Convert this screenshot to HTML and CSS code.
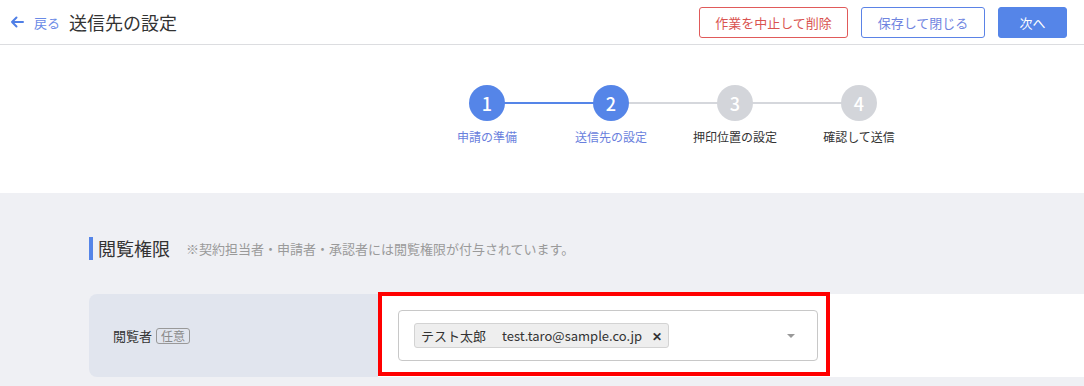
FILE: index.html
```html
<!DOCTYPE html>
<html lang="ja">

<head>
  <meta charset="UTF-8">
  <title>送信先の設定</title>
  <link rel="stylesheet" href="styles.css">
</head>

<body>
  <header class="topbar">
    <a class="back" href="#">
      <svg width="14" height="12" viewBox="0 0 14 12">
        <path d="M13 6H2M6.5 1.5L2 6l4.5 4.5" fill="none" stroke="#4f7fe6" stroke-width="2" stroke-linecap="round" stroke-linejoin="round"/>
      </svg>
      <span>戻る</span>
    </a>
    <h1 class="title">送信先の設定</h1>
    <div class="actions">
      <button class="btn btn-danger">作業を中止して削除</button>
      <button class="btn btn-outline">保存して閉じる</button>
      <button class="btn btn-primary">次へ</button>
    </div>
  </header>

  <div class="stepper">
    <div class="step done">
      <div class="dot">1</div>
      <div class="label">申請の準備</div>
    </div>
    <div class="step done">
      <div class="dot">2</div>
      <div class="label">送信先の設定</div>
    </div>
    <div class="step">
      <div class="dot">3</div>
      <div class="label">押印位置の設定</div>
    </div>
    <div class="step">
      <div class="dot">4</div>
      <div class="label">確認して送信</div>
    </div>
  </div>

  <main class="content">
    <div class="section-head">
      <h2>閲覧権限</h2>
      <span class="note">※契約担当者・申請者・承認者には閲覧権限が付与されています。</span>
    </div>

    <div class="field-row">
      <div class="field-label">
        閲覧者 <span class="badge">任意</span>
      </div>
      <div class="field-value">
        <div class="select">
          <span class="chip">
            <span class="chip-name">テスト太郎</span>
            <span>test.taro@sample.co.jp</span>
            <span class="chip-x">✕</span>
          </span>
          <span class="caret"></span>
        </div>
      </div>
      <!-- annotation frame -->
      <div class="highlight"></div>
    </div>
  </main>
</body>

</html>
```

FILE: styles.css
```css
body {
  margin: 0;
  width: 1084px;
  height: 386px;
  overflow: hidden;
  font-family: "Noto Sans CJK JP", "Noto Sans", sans-serif;
  color: #333;
  background: #fff;
}

.topbar {
  display: flex;
  align-items: center;
  height: 44px;
  padding: 0 17px 0 10px;
  border-bottom: 1px solid #dcdde0;
}

.back {
  display: flex;
  align-items: center;
  gap: 10px;
  color: #6a8ae6;
  font-size: 13px;
  text-decoration: none;
}

.title {
  margin: 0 0 0 9px;
  font-size: 18px;
  font-weight: normal;
  color: #333;
}

.actions {
  margin-left: auto;
  display: flex;
  gap: 13px;
}

.btn {
  height: 31px;
  padding: 0;
  white-space: nowrap;
  font-family: inherit;
  font-size: 13px;
  border-radius: 3px;
  background: #fff;
  cursor: pointer;
}

.btn-danger {
  width: 149px;
  border: 1px solid #e05a5a;
  color: #d9534f;
}

.btn-outline {
  width: 124px;
  border: 1px solid #5b83e6;
  color: #6f84df;
}

.btn-primary {
  width: 69px;
  border: 1px solid #5585e8;
  background: #5585e8;
  color: #fff;
}

.stepper {
  display: flex;
  height: 148px;
  padding-left: 425px;
  padding-top: 40px;
  box-sizing: border-box;
}

.step {
  position: relative;
  width: 124px;
  display: flex;
  flex-direction: column;
  align-items: center;
}

.step + .step::before {
  content: "";
  position: absolute;
  top: 17px;
  left: -62px;
  width: 124px;
  height: 2px;
  background: #d5d7dc;
}

.step.done + .step.done::before {
  background: #5585e8;
}

.dot {
  position: relative;
  z-index: 1;
  width: 36px;
  height: 36px;
  border-radius: 50%;
  background: #d3d5da;
  color: #fff;
  font-size: 18px;
  font-weight: 500;
  line-height: 36px;
  text-align: center;
}

.step.done .dot {
  background: #5585e8;
}

.label {
  margin-top: 7px;
  font-size: 12px;
  color: #333;
}

.step.done .label {
  color: #6a7fdd;
}

.content {
  background: #eff0f4;
  height: 193px;
  padding: 44px 0 0 89px;
  box-sizing: border-box;
}

.section-head {
  display: flex;
  align-items: center;
}

.section-head h2 {
  margin: 0;
  padding-left: 5px;
  border-left: 4px solid #5585e8;
  font-size: 18px;
  font-weight: normal;
  line-height: 23px;
}

.note {
  margin-left: 16px;
  font-size: 13px;
  color: #9a9a9a;
}

.field-row {
  position: relative;
  display: flex;
  width: 995px;
  height: 83px;
  margin-top: 34px;
}

.field-label {
  width: 289px;
  display: flex;
  align-items: center;
  gap: 4px;
  padding-left: 24px;
  box-sizing: border-box;
  background: #e1e5ee;
  border-radius: 8px 0 0 8px;
  font-size: 13px;
}

.badge {
  padding: 0 4px;
  border: 1px solid #999;
  border-radius: 3px;
  font-size: 12px;
  line-height: 14px;
  color: #8a8a8a;
}

.field-value {
  flex: 1;
  background: #fff;
  padding: 16px 20px;
}

.select {
  display: flex;
  align-items: center;
  width: 420px;
  height: 51px;
  box-sizing: border-box;
  padding: 0 15px;
  border: 1px solid #c8c8c8;
  border-radius: 4px;
}

.chip {
  display: flex;
  align-items: center;
  height: 25px;
  box-sizing: border-box;
  padding: 0 6px;
  background: #eeeeee;
  border: 1px solid #d3d3d3;
  border-radius: 3px;
  font-size: 13px;
}

.chip-name {
  margin-right: 16px;
}

.chip-x {
  margin-left: 10px;
  font-size: 12px;
  font-weight: bold;
}

.caret {
  margin-left: auto;
  margin-right: 7px;
  width: 0;
  height: 0;
  border-left: 4px solid transparent;
  border-right: 4px solid transparent;
  border-top: 4px solid #999;
}

.highlight {
  position: absolute;
  left: 289px;
  top: -2px;
  width: 452px;
  height: 84px;
  box-sizing: border-box;
  border: 4px solid #f00;
}
```
